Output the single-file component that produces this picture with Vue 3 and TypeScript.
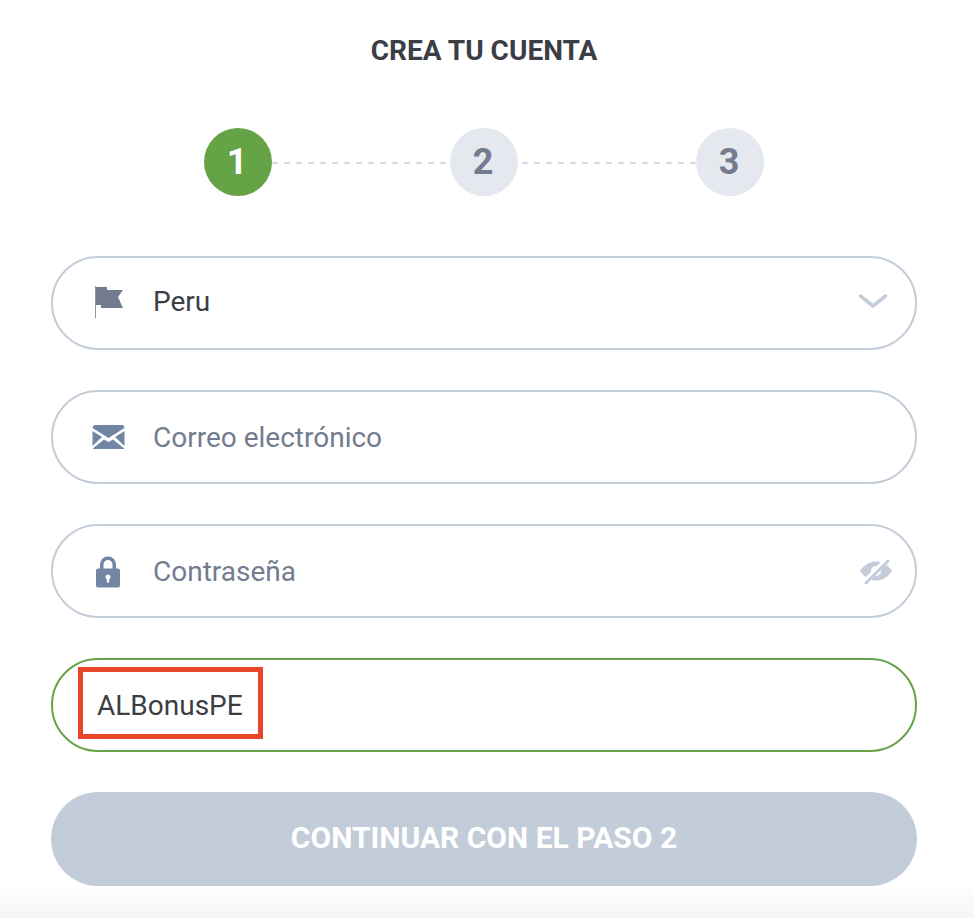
<script setup lang="ts">
const steps = [1, 2, 3]
</script>

<template>
  <main class="page">
    <h1 class="title">CREA TU CUENTA</h1>
    <div class="steps">
      <template v-for="(s, i) in steps" :key="s">
        <div class="step" :class="{ active: i === 0 }">{{ s }}</div>
        <div v-if="i < steps.length - 1" class="dash" :class="{ second: i === 1 }"></div>
      </template>
    </div>
    <form class="form" @submit.prevent>
      <div class="field country">
        <svg class="icon" width="32" height="34" viewBox="0 0 32 34">
          <rect x="2" y="0" width="1" height="32" fill="#8e97a8" />
          <path d="M3 1H14V4H30L25 11L30 22H8V19H3Z" fill="#737c8f" />
        </svg>
        <span class="value">Peru</span>
        <svg class="end chevron" width="30" height="18" viewBox="0 0 30 18">
          <path d="M2.500 3L15 13L27.500 3" fill="none" stroke="#c3ccd9" stroke-width="3.600" stroke-linecap="round" stroke-linejoin="round" />
        </svg>
      </div>
      <div class="field">
        <svg class="icon mail" width="33" height="26" viewBox="0 0 33 26">
          <path d="M3 1H30Q32 1 32.500 4L16.500 14L.5 4Q1 1 3 1Z" fill="#7285a3" />
          <path d="M.5 7L10 13L.5 22Z M32.500 7L23 13L32.500 22Z" fill="#7285a3" />
          <path d="M.8 24.500L12 15.500L16.500 18L21 15.500L32.200 24.500Q32 25 30 25H3Q1 25 .8 24.500Z" fill="#7285a3" />
        </svg>
        <span class="placeholder">Correo electrónico</span>
      </div>
      <div class="field">
        <svg class="icon lock" width="26" height="33" viewBox="0 0 26 33">
          <path fill-rule="evenodd" d="M3 13H5V9A8 8 0 0 1 21 9V13H23Q25 13 25 15V30Q25 32 23 32H3Q1 32 1 30V15Q1 13 3 13ZM8.500 13H17.500V9A4.500 4.500 0 0 0 8.500 9ZM13 19A2.500 2.500 0 0 0 11.800 23.700V27H14.200V23.700A2.500 2.500 0 0 0 13 19Z" fill="#7285a3" />
        </svg>
        <span class="placeholder">Contraseña</span>
        <svg class="end" width="34" height="28" viewBox="0 0 34 28">
          <path d="M1 14C6 7 11 4.500 17 4.500C23 4.500 28 7 33 14C28 21 23 23.500 17 23.500C11 23.500 6 21 1 14Z" fill="#c3ccd9" />
          <circle cx="17" cy="14" r="5" fill="#fff" />
          <circle cx="17" cy="14" r="3" fill="#c3ccd9" />
          <path d="M6 25L28 3" stroke="#fff" stroke-width="6" />
          <path d="M7 26L29 4" stroke="#c3ccd9" stroke-width="3" stroke-linecap="round" />
        </svg>
      </div>
      <div class="field promo">
        <span class="value code">ALBonusPE</span>
        <div class="mark"></div>
      </div>
      <button class="submit" type="button">CONTINUAR CON EL PASO 2</button>
    </form>
  </main>
</template>

<style>
html, body { margin: 0; background: #fff; }
</style>

<style scoped>
.page {
  box-sizing: border-box;
  width: 974px;
  height: 918px;
  padding: 0 57px 0 51px;
  font-family: Roboto, sans-serif;
  background: linear-gradient(to bottom, #fff 0, #fff 884px, #f4f4f4 918px);
  overflow: hidden;
}
.title {
  margin: 0;
  padding-top: 35px;
  height: 128px;
  box-sizing: border-box;
  line-height: 32px;
  font-size: 28px;
  font-weight: 700;
  text-align: center;
  color: #3c3e46;
}
.steps {
  display: flex;
  align-items: center;
  justify-content: center;
  height: 68px;
}
.step {
  box-sizing: border-box;
  width: 68px;
  height: 68px;
  padding: 0 2px 0 0;
  border-radius: 50%;
  background: #e5e8ee;
  color: #737c8f;
  font-size: 36px;
  font-weight: 700;
  display: flex;
  align-items: center;
  justify-content: center;
}
.step.active {
  background: #66a346;
  color: #fff;
}
.dash {
  width: 174px;
  height: 2px;
  margin: 2px 4px 0 0;
  background: repeating-linear-gradient(to right, #d6d9df 0 6px, transparent 6px 12px);
}
.dash.second {
  margin: 2px 0 0 4px;
}
.form {
  display: flex;
  flex-direction: column;
  gap: 40px;
  margin-top: 60px;
}
.field {
  position: relative;
  box-sizing: border-box;
  height: 94px;
  border: 2px solid #c3ccd9;
  border-radius: 47px;
  display: flex;
  align-items: center;
  padding: 0 22px 0 100px;
  font-size: 28px;
}
.country {
  padding-bottom: 3px;
}
.icon {
  position: absolute;
  left: 40px;
  top: 50%;
  transform: translateY(-50%);
}
.mail { left: 39px; }
.lock { left: 42px; top: calc(50% + 1px); }
.value { color: #3c3e46; }
.placeholder { color: #737c8f; }
.end { margin-left: auto; }
.chevron { margin-right: 5px; }
.promo {
  border-color: #66a346;
  padding-left: 44px;
}
.mark {
  position: absolute;
  left: 25px;
  top: 7px;
  width: 185px;
  height: 72px;
  box-sizing: border-box;
  border: 5px solid #e8452a;
}
.submit {
  height: 94px;
  border: 0;
  border-radius: 47px;
  background: #c3ccd9;
  color: #fff;
  font-family: Roboto, sans-serif;
  font-size: 30px;
  font-weight: 700;
  padding: 0 0 3px;
}
</style>
